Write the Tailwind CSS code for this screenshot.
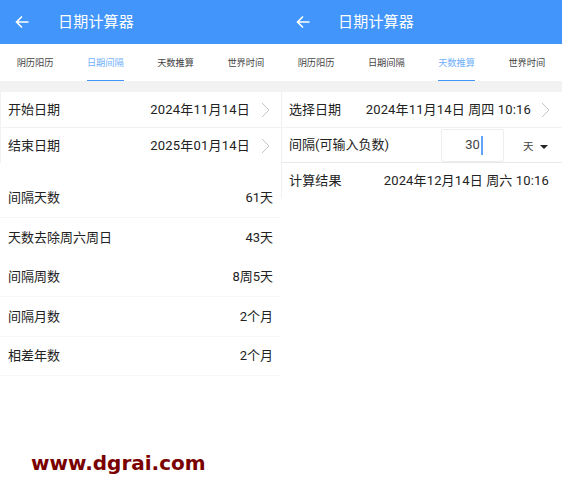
<!DOCTYPE html>
<html lang="zh">
<head>
    <meta charset="UTF-8">
    <title>日期计算器</title>
    <script src="https://cdn.jsdelivr.net/npm/@tailwindcss/browser@4"></script>
</head>
<body class="bg-white">
    <div class="relative flex w-[562px] h-[500px] overflow-hidden bg-white text-[#222] font-['Roboto','Noto_Sans_CJK_SC',sans-serif]">
        <!-- Left: date interval -->
        <div class="w-[281px] h-full">
            <div class="flex items-center h-[44px] bg-[#4296fb] text-white">
                <svg class="ml-[15px] w-[14px] h-[14px]" viewBox="0 0 14 14" fill="none" stroke="white" stroke-width="1.6"><path d="M13.5 7H1.5M7 1.5L1.5 7L7 12.5"/></svg>
                <span class="ml-[29px] text-[15px] tracking-[0.2px]">日期计算器</span>
            </div>
            <div class="grid grid-cols-4 h-[37px] text-[9.25px] text-[#444]">
                <div class="flex justify-center"><span class="pt-[12px]">阴历阳历</span></div>
                <div class="flex justify-center"><span class="pt-[12px] h-[37px] text-[#6fb0fb] border-b border-[#4296fb]">日期间隔</span></div>
                <div class="flex justify-center"><span class="pt-[12px]">天数推算</span></div>
                <div class="flex justify-center"><span class="pt-[12px]">世界时间</span></div>
            </div>
            <div class="h-[11px] bg-[#f2f2f2]"></div>
            <div class="border-l border-[#f2f2f2]">
                <div class="flex items-center justify-between h-[36px] pl-[7px] pr-[11px] pt-[1px] text-[13px] border-b border-[#f2f2f2]">
                    <span>开始日期</span>
                    <span class="flex items-center gap-[11px]"><span class="tracking-[0.2px]">2024年11月14日</span>
                        <svg class="w-[9px] h-[16px]" viewBox="0 0 9 16" fill="none" stroke="#c4c4c4"><path d="M1 1L8 8L1 15"/></svg></span>
                </div>
                <div class="flex items-center justify-between h-[35px] pl-[7px] pr-[11px] text-[13px]">
                    <span>结束日期</span>
                    <span class="flex items-center gap-[11px]"><span class="tracking-[0.2px]">2025年01月14日</span>
                        <svg class="w-[9px] h-[16px]" viewBox="0 0 9 16" fill="none" stroke="#c4c4c4"><path d="M1 1L8 8L1 15"/></svg></span>
                </div>
            </div>
            <div class="mt-[16px] text-[13px]">
                <div class="flex items-center justify-between h-[39px] px-[8px] border-b border-[#f7f7f7]"><span>间隔天数</span><span>61天</span></div>
                <div class="flex items-center justify-between h-[40px] px-[8px]"><span>天数去除周六周日</span><span>43天</span></div>
                <div class="flex items-center justify-between h-[39px] px-[8px] border-b border-[#f7f7f7]"><span>间隔周数</span><span>8周5天</span></div>
                <div class="flex items-center justify-between h-[40px] px-[8px] border-b border-[#f7f7f7]"><span>间隔月数</span><span>2个月</span></div>
                <div class="flex items-center justify-between h-[39px] px-[8px] border-b border-[#f7f7f7]"><span>相差年数</span><span>2个月</span></div>
            </div>
        </div>
        <!-- Right: days calculation -->
        <div class="w-[281px] h-full">
            <div class="flex items-center h-[44px] bg-[#4296fb] text-white">
                <svg class="ml-[15px] w-[14px] h-[14px]" viewBox="0 0 14 14" fill="none" stroke="white" stroke-width="1.6"><path d="M13.5 7H1.5M7 1.5L1.5 7L7 12.5"/></svg>
                <span class="ml-[28px] text-[15px] tracking-[0.2px]">日期计算器</span>
            </div>
            <div class="grid grid-cols-4 h-[37px] text-[9.25px] text-[#444]">
                <div class="flex justify-center"><span class="pt-[12px]">阴历阳历</span></div>
                <div class="flex justify-center"><span class="pt-[12px]">日期间隔</span></div>
                <div class="flex justify-center"><span class="pt-[12px] h-[37px] text-[#6fb0fb] border-b border-[#4296fb]">天数推算</span></div>
                <div class="flex justify-center"><span class="pt-[12px]">世界时间</span></div>
            </div>
            <div class="h-[11px] bg-[#f2f2f2]"></div>
            <div class="border-l border-[#f0f0f0]">
                <div class="flex items-center justify-between h-[36px] pl-[7px] pr-[12px] pt-[1px] text-[13px] border-b border-[#f2f2f2]">
                    <span>选择日期</span>
                    <span class="flex items-center gap-[10px] tracking-[0.15px]">2024年11月14日 周四 10:16
                        <svg class="w-[9px] h-[16px]" viewBox="0 0 9 16" fill="none" stroke="#c4c4c4"><path d="M1 1L8 8L1 15"/></svg></span>
                </div>
                <div class="flex items-center h-[35px] pl-[7px] text-[13px] border-b border-[#e8e8e8]">
                    <span>间隔(可输入负数)</span>
                    <div class="flex items-center justify-center ml-auto mr-[58px] w-[63px] h-[33px] pl-[3px] text-[#444] border border-[#eee] rounded-[2px]">30<span class="ml-[1px] w-[2px] h-[19px] bg-[#5fa6fb]"></span></div>
                    <span class="absolute left-[523px] top-[139px] flex items-center text-[10.5px] text-[#444] gap-[6px]">天<span class="w-0 h-0 border-x-[4px] border-x-transparent border-t-[4px] border-t-[#222]"></span></span>
                </div>
                <div class="flex items-center justify-between h-[35px] pl-[7px] pr-[13px] text-[13px] tracking-[0.15px]">
                    <span>计算结果</span>
                    <span>2024年12月14日 周六 10:16</span>
                </div>
            </div>
        </div>
        <!-- Watermark -->
        <div class="absolute left-[31px] top-[450px] text-[#7a0000] text-[20px] leading-[26px] font-bold font-['DejaVu_Sans',sans-serif]">www.dgrai.com</div>
    </div>
</body>
</html>
